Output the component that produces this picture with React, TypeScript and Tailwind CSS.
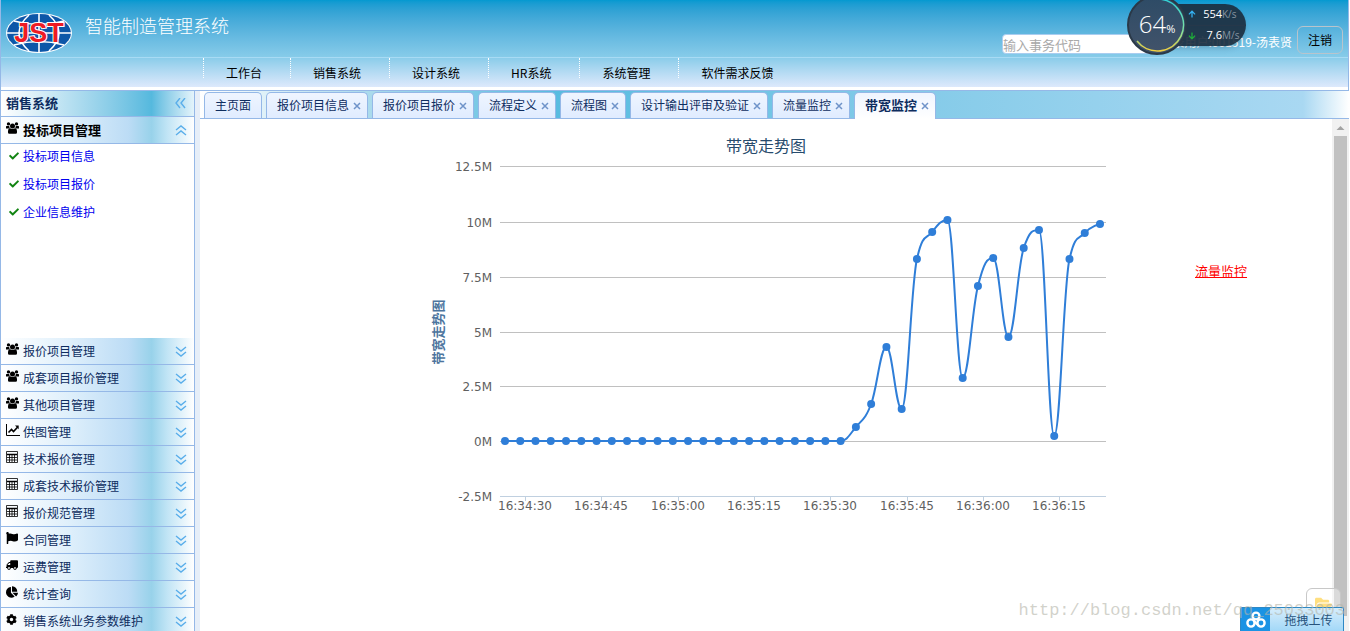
import type { ReactNode } from "react";
import {
  FaArrowDown,
  FaArrowUp,
  FaChartPie,
  FaCheck,
  FaCog,
  FaFlag,
  FaFolderOpen,
  FaTruck,
} from "react-icons/fa";

const NAV = ["工作台", "销售系统", "设计系统", "HR系统", "系统管理", "软件需求反馈"];

const TABS = [
  { title: "主页面", closable: false },
  { title: "报价项目信息", closable: true },
  { title: "报价项目报价", closable: true },
  { title: "流程定义", closable: true },
  { title: "流程图", closable: true },
  { title: "设计输出评审及验证", closable: true },
  { title: "流量监控", closable: true },
  { title: "带宽监控", closable: true, active: true },
];

const LINKS = ["投标项目信息", "投标项目报价", "企业信息维护"];

function GroupIcon() {
  return (
    <svg width="13" height="12" viewBox="0 0 13 12" fill="currentColor" aria-hidden>
      <circle cx="2.500" cy="1.900" r="1.700" />
      <circle cx="10.500" cy="1.900" r="1.700" />
      <circle cx="6.500" cy="4" r="2.500" />
      <path d="M0 6.400V4.600Q0 3.800 1 4h2.200q0 1.800 1 2.600zM13 6.400V4.600q0-.8-1-.6H9.800q0 1.800-1 2.600z" />
      <path d="M2 10.500V9q0-2.500 2-2.700 2.500 1.300 5 0Q11 6.500 11 9v1.500q0 1.200-1.300 1.200H3.300Q2 11.700 2 10.500z" />
    </svg>
  );
}

function LineIcon() {
  return (
    <svg width="14" height="12" viewBox="0 0 14 12" fill="none" stroke="currentColor" aria-hidden>
      <path d="M.5 0v11.500H14" />
      <path d="M2.500 8.500L5.500 5.500 7.500 7.500 11.500 3.200" strokeWidth="1.600" />
      <path d="M9 1.500h3.700v3.700z" fill="currentColor" stroke="none" />
    </svg>
  );
}

function GridIcon() {
  return (
    <svg width="12" height="12" viewBox="0 0 12 12" fill="none" stroke="currentColor" aria-hidden>
      <path d="M.5.500h11v11H.500z" strokeOpacity="0.800" />
      <path d="M1 3.500h10" strokeWidth="1.500" />
      <path d="M1 6.500h10M1 9h10M3.500 4v7M6 4v7M8.500 4v7" strokeOpacity="0.800" />
    </svg>
  );
}

const GROUPS: { title: string; icon: ReactNode }[] = [
  { title: "报价项目管理", icon: <GroupIcon /> },
  { title: "成套项目报价管理", icon: <GroupIcon /> },
  { title: "其他项目管理", icon: <GroupIcon /> },
  { title: "供图管理", icon: <LineIcon /> },
  { title: "技术报价管理", icon: <GridIcon /> },
  { title: "成套技术报价管理", icon: <GridIcon /> },
  { title: "报价规范管理", icon: <GridIcon /> },
  { title: "合同管理", icon: <FaFlag size={12} /> },
  { title: "运费管理", icon: <FaTruck size={12} className="-scale-x-100" /> },
  { title: "统计查询", icon: <FaChartPie size={12} /> },
  { title: "销售系统业务参数维护", icon: <FaCog size={11} /> },
];

const CHEVRONS = {
  down: "M1 1l5 4 5-4M1 6l5 4 5-4",
  up: "M1 5l5-4 5 4M1 10l5-4 5 4",
  left: "M5 0L1 5l4 5M10 0L6 5l4 5",
};

function Chevrons({ dir }: { dir: keyof typeof CHEVRONS }) {
  return (
    <svg width="12" height="11" viewBox="0 0 12 11" fill="none" stroke="#5aaeea" strokeWidth="1.4" aria-hidden>
      <path d={CHEVRONS[dir]} />
    </svg>
  );
}

function Logo() {
  return (
    <svg width="68" height="42" viewBox="0 0 68 42" role="img" aria-label="JST">
      <ellipse cx="34" cy="21" rx="33" ry="20" fill="#fff" />
      <ellipse cx="34" cy="21" rx="32" ry="19" fill="#0d57a8" />
      <g fill="none" stroke="#fff" strokeWidth="1.6">
        <path d="M34 2v38M2 21h64M9 9q25 7 50 0M9 33q25-7 50 0" />
        <path d="M24 3Q4 21 24 39M44 3q20 18 0 36" />
      </g>
      <text
        x="34"
        y="30"
        textAnchor="middle"
        fontFamily="Liberation Sans, sans-serif"
        fontWeight="bold"
        fontSize="27"
        fill="#ee1c25"
        stroke="#fff"
        strokeWidth="2"
        paintOrder="stroke"
      >
        JST
      </text>
    </svg>
  );
}

function Header() {
  return (
    <header className="relative shrink-0 border-r border-b border-l border-[#95b8e7] bg-white pb-[3px]">
      <div className="bg-linear-to-b from-[#0399d0] via-[#86cbe9] via-65% to-[#dde9fc]">
        <div className="flex h-[58px] items-end justify-between border-b border-[#a8dbf4] pr-[5px] pb-[3px] pl-1">
          <div className="flex gap-3">
            <Logo />
            <h1 className="text-lg leading-[26px] font-light text-white">智能制造管理系统</h1>
          </div>
          <div className="flex items-end">
            <input
              type="text"
              aria-label="事务代码"
              placeholder="输入事务代码"
              className="h-5 w-[150px] rounded border border-[#a9cdf0] bg-white text-[13px] placeholder:text-[#a9a9a9]"
            />
            <span className="ml-2 w-[132px] text-right leading-6 whitespace-nowrap text-white">
              登录用户:001519-汤表贤
            </span>
            <button type="button" className="ml-[5px] h-7 w-[46px] rounded-md border border-[#b9c4cc]">
              注销
            </button>
          </div>
        </div>
        <nav className="flex h-[29px] pl-[202px]">
          {NAV.map((name) => (
            <a key={name} href="#" className="h-5 border-l border-dotted border-white pr-7 pl-[22px] leading-[30px]">
              {name}
            </a>
          ))}
        </nav>
      </div>
      <SpeedWidget />
    </header>
  );
}

function SpeedWidget() {
  return (
    <div className="absolute top-0 right-[102px] h-14 w-[119px] font-['Open_Sans',sans-serif] text-[11px] text-white">
      <div className="absolute top-1 right-0 flex h-[42px] w-[90px] flex-col rounded-r-full bg-[#1b2b3c]/90 pl-[32px] shadow-md">
        <div className="flex flex-1 items-center border-b border-[#26384a]">
          <FaArrowUp size={8} className="text-[#35b4f5]" />
          <span className="ml-1 w-[22px] text-right">554</span>
          <span className="text-[10px] text-[#8794a0]">K/s</span>
        </div>
        <div className="flex flex-1 items-center">
          <FaArrowDown size={8} className="text-[#1fae3a]" />
          <span className="ml-1 w-[22px] text-right">7.6</span>
          <span className="text-[10px] text-[#8794a0]">M/s</span>
        </div>
      </div>
      <svg className="absolute bottom-0 left-0" width="62" height="62" viewBox="0 0 62 62" aria-hidden>
        <defs>
          <linearGradient id="ring" x1="0" y1="0" x2="0" y2="1">
            <stop offset="0" stopColor="#2fd0d8" />
            <stop offset="0.6" stopColor="#7fe3a0" />
            <stop offset="1" stopColor="#f2cf3f" />
          </linearGradient>
          <linearGradient id="dial" x1="0" y1="0" x2="0" y2="1">
            <stop offset="0" stopColor="#2d4b66" />
            <stop offset="1" stopColor="#42536a" />
          </linearGradient>
        </defs>
        <circle cx="30" cy="31" r="29" fill="url(#dial)" stroke="#2a3948" strokeWidth="2" />
        <path d="M30 5A26 26 0 1 1 10 47" fill="none" stroke="url(#ring)" strokeWidth="1.6" />
      </svg>
      <div className="absolute top-2 left-0 flex w-[60px] items-baseline justify-center leading-8">
        <span className="text-2xl leading-8 font-light">64</span>
        <span>%</span>
      </div>
    </div>
  );
}

function Sidebar() {
  return (
    <aside className="flex w-[195px] shrink-0 flex-col border-r border-l border-[#95b8e7] text-[#0e2d5f]">
      <div className="flex h-[26px] shrink-0 items-center justify-between border-b border-[#95b8e7] bg-linear-to-r from-white via-[#55b9de] via-78% to-[#e4f4fb] pr-[7px] pl-[5px]">
        <h2 className="pb-px text-[13px] font-bold">销售系统</h2>
        <Chevrons dir="left" />
      </div>
      <GroupHeader title="投标项目管理" icon={<GroupIcon />} open />
      <ul className="min-h-[194px] shrink-0 bg-white">
        {LINKS.map((name) => (
          <li key={name} className="mb-1 flex h-6 items-center gap-1 pl-2">
            <FaCheck size={10} className="text-[#118411]" />
            <a href="#" className="text-[#0000ee]">
              {name}
            </a>
          </li>
        ))}
      </ul>
      {GROUPS.map((group) => (
        <GroupHeader key={group.title} title={group.title} icon={group.icon} />
      ))}
    </aside>
  );
}

function GroupHeader({ title, icon, open = false }: { title: string; icon: ReactNode; open?: boolean }) {
  return (
    <button
      type="button"
      aria-expanded={open}
      className="flex h-[27px] shrink-0 items-center border-b border-[#95b8e7] bg-[linear-gradient(to_right,#fff_0%,#deeffb_36%,#bcdcf5_66%,#98d2ea_78%,#c0e4f5_86%,#fff_100%)] pr-[7px] pl-[5px] text-left"
    >
      <span className="mb-1 w-[17px] text-black">{icon}</span>
      <span className={open ? "flex-1 text-[13px] font-bold text-black" : "flex-1"}>{title}</span>
      <Chevrons dir={open ? "up" : "down"} />
    </button>
  );
}

function Tabs() {
  return (
    <div className="flex h-7 shrink-0 items-end gap-1 border-b border-[#95b8e7] bg-[linear-gradient(to_right,#fff_0%,#a9daec_15%,#58bce0_31%,#82cae8_60%,#a9d8f2_96%,#fff_100%)] pl-1">
      {TABS.map((tab) => (
        <div
          key={tab.title}
          className={
            tab.active
              ? "-mb-px flex h-[27px] items-center rounded-t-[5px] border border-b-0 border-[#95b8e7] bg-linear-to-b from-[#eff5ff] to-white text-[13px] font-bold"
              : "flex h-[26px] items-center rounded-t-[5px] border border-b-0 border-[#95b8e7] bg-linear-to-b from-[#eff5ff] to-[#e0ecff]"
          }
        >
          <button
            type="button"
            className={
              tab.closable ? "pb-[2px] pl-[10px] whitespace-nowrap" : "px-[10px] pb-[2px] whitespace-nowrap"
            }
          >
            {tab.title}
          </button>
          {tab.closable && (
            <button type="button" aria-label={`关闭${tab.title}`} className="mr-[6px] ml-1">
              <svg width="8" height="8" viewBox="0 0 8 8" stroke="#6f93c9" strokeWidth="1.5" aria-hidden>
                <path d="M1 1l6 6M7 1L1 7" />
              </svg>
            </button>
          )}
        </div>
      ))}
    </div>
  );
}

// plot geometry, in svg units
const PLOT = { left: 74, right: 680, zero: 311, bottom: 366 };

const Y_TICKS = [
  { label: "12.5M", y: 36 },
  { label: "10M", y: 92 },
  { label: "7.5M", y: 147 },
  { label: "5M", y: 202 },
  { label: "2.5M", y: 256 },
  { label: "0M", y: 311 },
  { label: "-2.5M", y: 366 },
];

const X_TICKS = ["16:34:30", "16:34:45", "16:35:00", "16:35:15", "16:35:30", "16:35:45", "16:36:00", "16:36:15"];

// one sample every 3 seconds, idle at first, values are svg y
const SAMPLES = [
  ...Array<number>(23).fill(PLOT.zero),
  297, 274, 217, 279, 129, 102, 90, 248, 156, 128, 207, 118, 100, 306, 129, 103, 94,
];

const POINTS = SAMPLES.map((y, i) => ({ x: 79 + i * (595 / 39), y }));

function splinePath(points: { x: number; y: number }[]) {
  let d = `M${points[0].x} ${points[0].y}`;
  let ctrl = points[0];
  for (let i = 1; i < points.length; i++) {
    const p = points[i];
    const last = points[i - 1];
    const next = points[i + 1];
    let left = p;
    let right = p;
    if (next) {
      const lx = (1.5 * p.x + last.x) / 2.5;
      const rx = (1.5 * p.x + next.x) / 2.5;
      let ly = (1.5 * p.y + last.y) / 2.5;
      let ry = (1.5 * p.y + next.y) / 2.5;
      const shift = ((ry - ly) * (rx - p.x)) / (rx - lx) + p.y - ry;
      ly += shift;
      ry += shift;
      // keep the curve from overshooting its neighbours
      if (ly > Math.max(last.y, p.y)) {
        ly = Math.max(last.y, p.y);
        ry = 2 * p.y - ly;
      } else if (ly < Math.min(last.y, p.y)) {
        ly = Math.min(last.y, p.y);
        ry = 2 * p.y - ly;
      }
      if (ry > Math.max(next.y, p.y)) {
        ry = Math.max(next.y, p.y);
        ly = 2 * p.y - ry;
      } else if (ry < Math.min(next.y, p.y)) {
        ry = Math.min(next.y, p.y);
        ly = 2 * p.y - ry;
      }
      left = { x: lx, y: ly };
      right = { x: rx, y: ry };
    }
    d += `C${ctrl.x} ${ctrl.y} ${left.x} ${left.y} ${p.x} ${p.y}`;
    ctrl = right;
  }
  return d;
}

function BandwidthChart() {
  return (
    <svg width="700" height="400" viewBox="0 0 700 400" className="shrink-0" role="img" aria-label="带宽走势图">
      <text x="340" y="22" textAnchor="middle" fontSize="16" fill="#274b6d">
        带宽走势图
      </text>
      <text transform="translate(17 202) rotate(-90)" textAnchor="middle" fontSize="13" fontWeight="bold" fill="#4d759e">
        带宽走势图
      </text>
      <g fontFamily="DejaVu Sans, sans-serif" fontSize="12" fill="#606060">
        {Y_TICKS.map((tick) => (
          <g key={tick.label}>
            <path
              d={`M${PLOT.left} ${tick.y + 0.5}H${PLOT.right}`}
              stroke={tick.y === PLOT.bottom ? "#c0d0e0" : "#c0c0c0"}
            />
            <text x="66" y={tick.y + 5} textAnchor="end">
              {tick.label}
            </text>
          </g>
        ))}
        {X_TICKS.map((label, i) => {
          const x = Math.round(99 + i * 76.3);
          return (
            <g key={label}>
              <path d={`M${x + 0.5} ${PLOT.bottom}v5`} stroke="#c0d0e0" />
              <text x={x} y={PLOT.bottom + 14} textAnchor="middle">
                {label}
              </text>
            </g>
          );
        })}
      </g>
      <path d={splinePath(POINTS)} fill="none" stroke="#2f7ed8" strokeWidth="2" />
      {POINTS.map((p) => (
        <circle key={p.x} cx={p.x} cy={p.y} r="4" fill="#2f7ed8" />
      ))}
    </svg>
  );
}

function UploadWidget() {
  return (
    <>
      <div className="absolute right-[9px] bottom-0 flex h-[43px] w-[35px] justify-center rounded-md border border-[#c8c8c8] bg-white/40 pt-[6px]">
        <FaFolderOpen size={17} className="text-[#ffdf80]" />
      </div>
      <button
        type="button"
        className="absolute right-[6px] bottom-0 flex h-6 w-[104px] items-center rounded-t-xs border border-b-0 border-[#2d88c5] bg-linear-to-b from-[#d6edfb] to-[#a2d8f8] text-[#27537c]"
      >
        <span className="flex h-full w-[29px] shrink-0 items-center justify-center bg-[#1b93e4]">
          <svg width="22" height="18" viewBox="0 0 22 18" fill="none" stroke="#fff" strokeWidth="2.4" aria-hidden>
            <circle cx="11" cy="5" r="3.4" />
            <circle cx="6" cy="12" r="3.6" />
            <circle cx="16" cy="12" r="3.6" />
            <path d="M8.500 9.500l5 5" />
          </svg>
        </span>
        <span className="flex-1 pl-1 text-center">拖拽上传</span>
      </button>
      <p className="pointer-events-none absolute right-[5px] bottom-2 font-['Liberation_Mono',monospace] text-[17px] text-[#b4b4a8]/60">
        http://blog.csdn.net/qq_25033003
      </p>
    </>
  );
}

export default function App() {
  return (
    <div className="relative flex h-screen flex-col overflow-hidden bg-white pr-px font-['Noto_Sans_CJK_SC',sans-serif] text-xs text-black">
      <Header />
      <div className="flex min-h-0 flex-1">
        <Sidebar />
        <div className="w-[5px] shrink-0 bg-[#e6eef8]" />
        <main className="flex min-w-0 flex-1 flex-col text-[#0e2d5f]">
          <Tabs />
          <div className="flex min-h-0 flex-1">
            <div className="flex min-w-0 flex-1 items-start gap-[69px] pt-[11px] pl-[226px]">
              <BandwidthChart />
              <a href="#" className="mt-[132px] text-[13px] whitespace-nowrap text-[#ff0000] underline">
                流量监控
              </a>
            </div>
            <div className="flex w-[17px] shrink-0 flex-col items-center bg-[#f1f1f1]">
              <svg width="17" height="17" viewBox="0 0 17 17" fill="#a3a3a3" aria-hidden>
                <path d="M4.500 11l4-4 4 4z" />
              </svg>
              <div className="mb-[15px] w-[13px] flex-1 bg-[#c1c1c1]" />
            </div>
          </div>
        </main>
      </div>
      <UploadWidget />
    </div>
  );
}
